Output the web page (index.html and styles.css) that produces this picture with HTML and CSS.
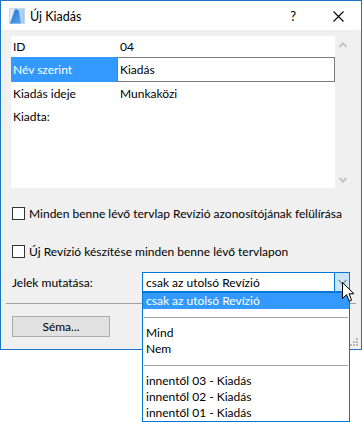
FILE: index.html
```html
<!DOCTYPE html>
<html lang="hu">
<head>
<meta charset="utf-8">
<title>Új Kiadás</title>
<link rel="stylesheet" href="styles.css">
</head>
<body>
<div class="window">
  <div class="titlebar">
    <svg class="app-icon" width="16" height="16" viewBox="0 0 16 16">
      <defs>
        <linearGradient id="g1" x1="0" y1="0" x2="1" y2="0">
          <stop offset="0" stop-color="#e4f0fb"/>
          <stop offset="1" stop-color="#9cc9f0"/>
        </linearGradient>
        <linearGradient id="g2" x1="0" y1="0" x2="1" y2="1">
          <stop offset="0" stop-color="#1f6fd0"/>
          <stop offset="1" stop-color="#5aa6ec"/>
        </linearGradient>
      </defs>
      <rect x="0.5" y="0.5" width="15" height="15" fill="url(#g1)" stroke="#c8d8ea"/>
      <path d="M1 15.5 L6 1.5 Q8.5 0.5 10 3 L12 15.5 Z" fill="url(#g2)"/>
    </svg>
    <span class="title">Új Kiadás</span>
    <span class="help">?</span>
    <svg class="close" width="11" height="11" viewBox="0 0 11 11">
      <path d="M0.5 0.5 L10.5 10.5 M10.5 0.5 L0.5 10.5" stroke="#000" stroke-width="1.1"/>
    </svg>
  </div>
  <div class="content">
    <div class="props-row">
      <div class="props">
        <div class="prow r1"><span class="plabel">ID</span><span class="pvalue">04</span></div>
        <div class="prow r2 selected"><span class="plabel">Név szerint</span><span class="pvalue edit">Kiadás</span></div>
        <div class="prow r3"><span class="plabel">Kiadás ideje</span><span class="pvalue">Munkaközi</span></div>
        <div class="prow r4"><span class="plabel">Kiadta:</span><span class="pvalue"></span></div>
      </div>
      <div class="scroll">
        <svg width="8" height="6" viewBox="0 0 8 6"><path d="M0.5 5 L4 1.5 L7.5 5" fill="none" stroke="#c3c3c3" stroke-width="2"/></svg>
        <svg width="8" height="6" viewBox="0 0 8 6"><path d="M0.5 1 L4 4.5 L7.5 1" fill="none" stroke="#c3c3c3" stroke-width="2"/></svg>
      </div>
    </div>
    <label class="check first"><span class="box"></span><span>Minden benne lévő tervlap Revízió azonosítójának felülírása</span></label>
    <label class="check second"><span class="box"></span><span>Új Revízió készítése minden benne lévő tervlapon</span></label>
    <div class="show-row">
      <span class="show-label">Jelek mutatása:</span>
      <div class="combo">
        <span class="combo-text">csak az utolsó Revízió</span>
        <span class="combo-btn">
          <svg width="9" height="6" viewBox="0 0 9 6"><path d="M0.5 1 L4.5 5 L8.5 1" fill="none" stroke="#8a8a8a" stroke-width="1.2"/></svg>
        </span>
      </div>
    </div>
    <div class="sep"></div>
    <button class="btn">Séma...</button>
  </div>
  <svg class="grip" width="9" height="9" viewBox="0 0 9 9">
    <rect x="6" y="0" width="2" height="2" fill="#b8b8b8"/>
    <rect x="3" y="3" width="2" height="2" fill="#b8b8b8"/>
    <rect x="6" y="3" width="2" height="2" fill="#b8b8b8"/>
    <rect x="0" y="6" width="2" height="2" fill="#b8b8b8"/>
    <rect x="3" y="6" width="2" height="2" fill="#b8b8b8"/>
    <rect x="6" y="6" width="2" height="2" fill="#b8b8b8"/>
  </svg>
</div>
<ul class="dropdown">
  <li class="item hl">csak az utolsó Revízió</li>
  <li class="item divider"></li>
  <li class="item">Mind</li>
  <li class="item">Nem</li>
  <li class="item divider"></li>
  <li class="item">innentől 03 - Kiadás</li>
  <li class="item">innentől 02 - Kiadás</li>
  <li class="item">innentől 01 - Kiadás</li>
</ul>
<svg class="cursor" width="13" height="21" viewBox="0 0 13 21">
  <path d="M0.5 0.5 L0.5 16.5 L4.5 12.7 L7.2 19.2 L9.6 18.2 L7 11.8 L12 11.8 Z" fill="#fff" stroke="#000" stroke-width="1" stroke-linejoin="miter"/>
</svg>
</body>
</html>
```

FILE: styles.css
```css
* { box-sizing: border-box; }
html, body { margin: 0; padding: 0; background: #fff; }
body {
  position: relative;
  width: 362px;
  height: 423px;
  overflow: hidden;
  font-family: Lato, "Noto Sans", sans-serif;
  font-size: 12px;
  color: #000;
}
.window {
  position: relative;
  width: 362px;
  height: 350px;
  border: 1px solid #1c74c6;
  background: #f0f0f0;
  display: flex;
  flex-direction: column;
}
.titlebar {
  height: 29px;
  background: #fff;
  display: flex;
  align-items: center;
  flex: none;
}
.app-icon { margin-left: 8px; margin-top: 1px; flex: none; }
.title { margin-left: 5px; font-size: 12.5px; margin-top: 1px; }
.help { margin-left: auto; font-size: 13px; margin-right: 37px; margin-top: 1px; }
.close { margin-right: 17px; margin-top: 1px; }
.content {
  padding: 6px 10px 0 10px;
  display: flex;
  flex-direction: column;
  align-items: flex-start;
}
.props-row { display: flex; }
.props {
  width: 324px;
  height: 152px;
  background: #fff;
}
.prow { display: flex; align-items: center; }
.r1 { height: 21px; }
.r2 { height: 25px; }
.r3 { height: 22px; }
.r4 { height: 24px; }
.plabel { width: 106px; padding-left: 2px; flex: none; height: 100%; display: flex; align-items: center; }
.pvalue { padding-left: 3px; flex: 1; height: 100%; display: flex; align-items: center; }
.selected .plabel { background: #3399ff; color: #fff; }
.pvalue.edit { border: 1px solid #7a7a7a; padding-left: 2px; }
.scroll {
  width: 14px;
  height: 152px;
  display: flex;
  flex-direction: column;
  justify-content: space-between;
  align-items: center;
  padding: 6px 0 5px 1px;
}
.check {
  display: flex;
  align-items: center;
  height: 16px;
  margin-left: 1px;
  white-space: nowrap;
}
.check.first { margin-top: 17px; }
.check.second { margin-top: 22px; }
.box {
  width: 13px;
  height: 13px;
  border: 1px solid #333;
  background: #fff;
  margin-right: 4px;
  flex: none;
}
.show-row {
  display: flex;
  align-items: center;
  margin-top: 13px;
  margin-left: 1px;
}
.show-label { width: 130px; }
.combo {
  width: 208px;
  height: 20px;
  border: 1px solid #0078d7;
  background: #fff;
  display: flex;
  align-items: center;
}
.combo-text { padding-left: 3px; flex: 1; }
.combo-btn {
  width: 15px;
  height: 18px;
  background: #cce4f7;
  border-left: 1px solid #0078d7;
  display: flex;
  align-items: center;
  justify-content: center;
}
.sep {
  align-self: stretch;
  height: 1px;
  background: #a0a0a0;
  margin: 11px -5px 0 -5px;
}
.btn {
  margin-top: 12px;
  margin-left: 1px;
  width: 98px;
  height: 21px;
  background: #e1e1e1;
  border: 1px solid #adadad;
  font: inherit;
  color: #000;
  padding: 0;
}
.grip { position: absolute; right: 2px; bottom: 2px; }
.dropdown {
  position: absolute;
  left: 142px;
  top: 292px;
  width: 208px;
  margin: 0;
  padding: 0;
  list-style: none;
  border: 1px solid #0078d7;
  background: #fff;
}
.item {
  height: 16px;
  line-height: 16px;
  padding-left: 3px;
  white-space: nowrap;
}
.item.hl { background: #3399ff; color: #fff; }
.item.divider { position: relative; }
.item.divider::after {
  content: "";
  position: absolute;
  left: 1px;
  right: 1px;
  top: 8px;
  height: 1px;
  background: #a0a0a0;
}
.cursor { position: absolute; left: 342px; top: 282px; }
```
